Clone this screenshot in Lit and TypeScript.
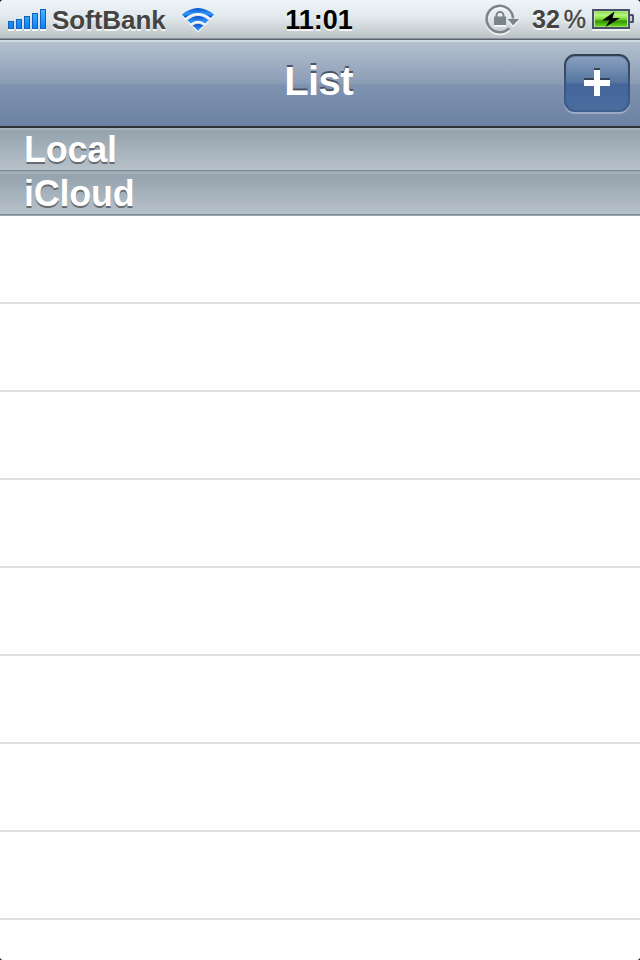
import { LitElement, html, css } from "lit";
import { customElement } from "lit/decorators.js";

@customElement("app-root")
export class AppRoot extends LitElement {
  static styles = css`
    :host { display: flex; flex-direction: column; position: relative; width: 640px; height: 960px; overflow: hidden; background: #fff; font-family: "Liberation Sans", Arial, sans-serif; font-weight: 700; }
    * { box-sizing: border-box; }
    svg { display: block; flex: none; }
    .status { height: 40px; flex: none; display: grid; grid-template-columns: 1fr auto 1fr; background: linear-gradient(#eff6f9, #e1e8eb 45%, #bdc5c8 37px, #b9c1c5 38px, #89929a 38px, #89929a 39px, #59636b 39px); font-size: 26px; line-height: 40px; color: #444; text-shadow: 0 2px 0 rgba(255,255,255,.75); }
    .left, .right { display: flex; align-items: flex-start; height: 40px; }
    .left { padding-left: 8px; }
    .right { justify-content: flex-end; padding-right: 5px; }
    .carrier { margin-left: 6px; width: 130px; white-space: nowrap; letter-spacing: -.05px; }
    .clock { color: #000; font-size: 27px; padding-right: 2px; }
    .pct { font-size: 25px; line-height: 39px; width: 60px; display: flex; gap: 4px; margin-left: 12px; }
    .pct .sign { font-weight: 400; -webkit-text-stroke: .4px #444; }
    .nav { height: 88px; flex: none; display: grid; grid-template-columns: 1fr auto 1fr; border-top: 2px solid #d0d9e2; border-bottom: 2px solid #2d3235; background: linear-gradient(#b4c0cf, #8a9cb5 42px, #7f93b0 43px, #6c82a4); }
    h1 { grid-column: 2; margin: 0; padding-right: 3px; font-size: 40px; letter-spacing: -.6px; line-height: 78px; color: #fff; text-shadow: 0 -2px 0 #485468; }
    .add { justify-self: end; margin: 12px 10px 0 0; width: 66px; height: 58px; padding: 2px; border: 0; border-radius: 11px; background: linear-gradient(#333f52, #3c5377 50%, #405f8e); box-shadow: 0 2px 0 rgba(188,202,220,.55); }
    .face { display: flex; width: 62px; height: 54px; border-radius: 9px; background: linear-gradient(#8aa1c1, #54749f 27px, #43659a 28px, #4a6c9f); box-shadow: inset 0 1px 1px rgba(40,60,90,.3); }
    .section { height: 44px; flex: none; padding-left: 24px; font-size: 36px; letter-spacing: -.25px; line-height: 43px; color: #fff; text-shadow: 0 2px 0 #666c70; background: linear-gradient(#a5b2bb 0 2px, #94a2ad 2px, #b7c1ca 42px, #7e8b94 42px 43px, #98a4ac 43px); }
    .row { height: 88px; flex: none; border-bottom: 2px solid #e0e0e0; }
    .corners { position: absolute; inset: 0; }
  `;

  render() {
    return html`
      <div class="status">
        <div class="left">
          <svg width="38" height="40" viewBox="0 0 38 40">
            <defs><linearGradient id="b" x1="0" y1="0" x2="0" y2="1"><stop stop-color="#45b8ff"/><stop offset="1" stop-color="#0880f5"/></linearGradient></defs>
            <path fill="#fff" opacity=".85" d="M0 29h6v2H0zM8 29h6v2H8zM16 29h6v2h-6zM24 29h6v2h-6zM32 29h6v2h-6z"/>
            <path fill="#1261bf" d="M0 21h6v8H0zM8 19h6v10H8zM16 16h6v13h-6zM24 13h6v16h-6zM32 9h6v20h-6z"/>
            <path fill="url(#b)" d="M1 22h4v6H1zM9 20h4v8H9zM17 17h4v11h-4zM25 14h4v14h-4zM33 10h4v18h-4z"/>
          </svg>
          <span class="carrier">SoftBank</span>
          <svg width="32" height="40" viewBox="0 0 32 40">
            <defs>
              <linearGradient id="w" x1="0" y1="8" x2="0" y2="16" gradientUnits="userSpaceOnUse" spreadMethod="repeat"><stop stop-color="#0a50c8"/><stop offset=".7" stop-color="#2f97fa"/><stop offset="1" stop-color="#1470e8"/></linearGradient>
              <g id="arcs"><path d="M0 14.5Q16 1.5 32 14.5L28.8 18Q16 8 3.2 18Z"/><path d="M5.5 20.3Q16 11.7 26.5 20.3L23.3 23.6Q16 17.7 8.7 23.6Z"/><path d="M10.8 25.6Q16 21.8 21.2 25.6L16 31Z"/></g>
            </defs>
            <use href="#arcs" y="1.8" fill="#fff" opacity=".85"/><use href="#arcs" fill="url(#w)"/>
          </svg>
        </div>
        <span class="clock">11:01</span>
        <div class="right">
          <svg width="36" height="40" viewBox="484 0 36 40">
            <defs><g id="lock"><path fill="none" stroke-width="2.6" d="M509.3 28.2A13.2 13.2 0 1 1 513 18.5"/><path stroke="none" d="M507.5 19h11.5l-5.8 6.5zM494 16.5h12v8.5h-12z"/><path fill="none" stroke-width="2" d="M496.5 17v-1.5a3.5 3.5 0 0 1 7 0V17"/></g></defs>
            <use href="#lock" y="1.7" fill="#fff" stroke="#fff" opacity=".8"/><use href="#lock" fill="#7b8589" stroke="#7b8589"/>
          </svg>
          <span class="pct"><span>32</span><span class="sign">%</span></span>
          <svg width="43" height="40" viewBox="592 0 43 40">
            <defs><linearGradient id="g" x1="0" y1="0" x2="0" y2="1"><stop stop-color="#8ade4c"/><stop offset=".25" stop-color="#b5f57f"/><stop offset=".5" stop-color="#7edb35"/><stop offset=".65" stop-color="#369306"/><stop offset="1" stop-color="#65dc1b"/></linearGradient></defs>
            <path fill="#fff" opacity=".7" d="M592 29h38v2h-38z"/>
            <path fill="#4a4f6b" d="M592 9h38v20h-38zM630 14h2.5q1.5 0 1.5 1.5v6q0 1.5-1.5 1.5H630z"/>
            <path fill="#c9d0d8" d="M630 16h2v5h-2z"/><path fill="#bfe8a0" d="M594 11h34v16h-34z"/><path fill="url(#g)" d="M595 11.5h32v15h-32z"/>
            <path d="M614.5 11.5L602 20.5h7.5L605.5 27L620 18h-7.5z"/>
          </svg>
        </div>
      </div>
      <header class="nav">
        <h1>List</h1>
        <button class="add" aria-label="Add"><span class="face">
          <svg width="62" height="54" viewBox="566 56 62 54"><path fill="#35435a" d="M594 68h6v10h10v4h-26v-4h10z"/><path fill="#fff" d="M594 70h6v10h10v6h-10v10h-6V86h-10v-6h10z"/></svg>
        </span></button>
      </header>
      <div class="section">Local</div>
      <div class="section">iCloud</div>
      ${Array.from({ length: 9 }, () => html`<div class="row"></div>`)}
      <svg class="corners" width="640" height="960"><path d="M0 0h3Q0 0 0 3zM640 0h-3q3 0 3 3zM0 960h3q-3 0-3-3zM640 960h-3q3 0 3-3z"/></svg>
    `;
  }
}
